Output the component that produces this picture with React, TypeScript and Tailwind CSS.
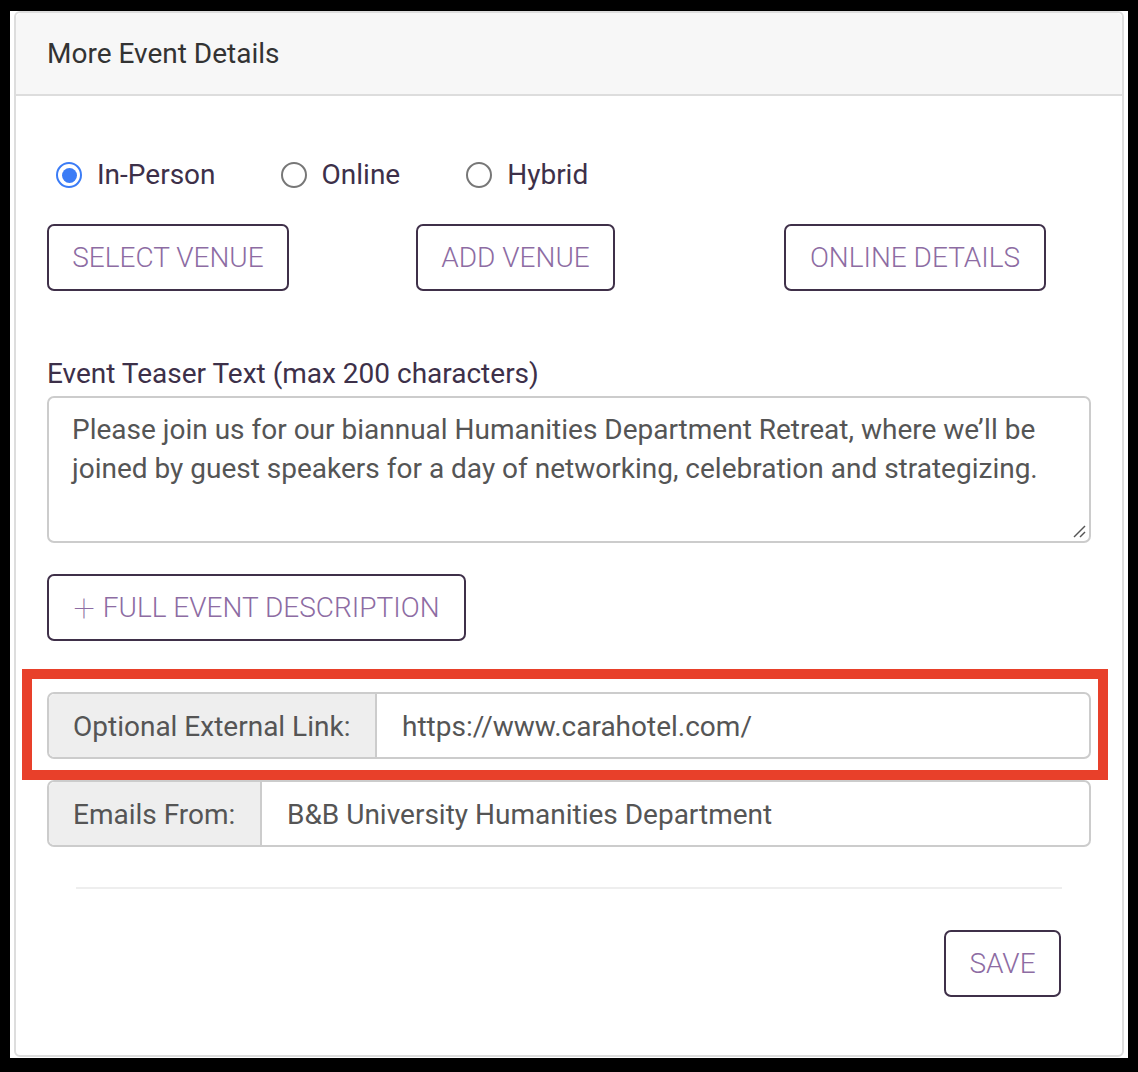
import React from "react";

const font = { fontFamily: "Roboto, 'Noto Sans', sans-serif" };

function Radio({ checked, label }: { checked?: boolean; label: string }) {
  return (
    <label className="flex items-center">
      {checked ? (
        <span className="flex h-[26px] w-[26px] items-center justify-center rounded-full border-[2.5px] border-[#3b7cf6] bg-white">
          <span className="h-[15px] w-[15px] rounded-full bg-[#3b7cf6]" />
        </span>
      ) : (
        <span className="h-[26px] w-[26px] rounded-full border-2 border-[#777777] bg-white" />
      )}
      <span className="ml-[15px] text-[28px] leading-[28px] text-[#3d3049]">{label}</span>
    </label>
  );
}

function OutlineButton({ children, w }: { children: React.ReactNode; w: string }) {
  return (
    <button
      className={`flex h-[67px] items-center justify-center rounded-[7px] border-2 border-[#3f3049] bg-white text-[28px] font-light text-[#8d6ca3] ${w}`}
    >
      {children}
    </button>
  );
}

export default function App() {
  return (
    <div className="h-[1072px] w-[1138px] bg-black pb-[14px] pl-[10px] pr-[10px] pt-[11px]" style={font}>
      <div className="h-full bg-white pl-[4px] pr-[4px]">
        <div className="flex h-[1046px] flex-col rounded-[6px] border-2 border-[#dddddd] bg-white">
          <div className="flex h-[83px] items-center rounded-t-[6px] border-b-2 border-[#dddddd] bg-[#f7f7f7] px-[31px]">
            <h2 className="text-[28px] font-normal text-[#333333]">More Event Details</h2>
          </div>
          <div className="flex flex-col px-[31px]">
            <div className="mt-[65px] flex items-center pl-[9px]">
              <Radio checked label="In-Person" />
              <div className="ml-[65px]">
                <Radio label="Online" />
              </div>
              <div className="ml-[66px]">
                <Radio label="Hybrid" />
              </div>
            </div>
            <div className="mt-[35px] flex items-center">
              <OutlineButton w="w-[242px]">SELECT VENUE</OutlineButton>
              <div className="ml-[127px]">
                <OutlineButton w="w-[199px]">ADD VENUE</OutlineButton>
              </div>
              <div className="ml-[169px]">
                <OutlineButton w="w-[262px]">ONLINE DETAILS</OutlineButton>
              </div>
            </div>
            <label className="mt-[67px] text-[28px] leading-[32px] text-[#3d3049]">
              Event Teaser Text (max 200 characters)
            </label>
            <div className="relative mt-[6px] h-[147px] rounded-[7px] border-2 border-[#cccccc] px-[23px] pt-[12px] text-[28px] leading-[39px] text-[#555555]">
              Please join us for our biannual Humanities Department Retreat, where we’ll be joined by guest speakers for a day of networking, celebration and strategizing.
              <svg className="absolute bottom-[2px] right-[2px]" width="16" height="16" viewBox="0 0 16 16">
                <line x1="3" y1="14" x2="14" y2="3" stroke="#555" strokeWidth="1.5" />
                <line x1="9" y1="14" x2="14" y2="9" stroke="#555" strokeWidth="1.5" />
              </svg>
            </div>
            <div className="mt-[31px] flex">
              <OutlineButton w="w-[419px]">
                <span className="mr-[8px] text-[38px] font-thin leading-none">+</span>FULL EVENT DESCRIPTION
              </OutlineButton>
            </div>
            <div className="relative mt-[51px]">
              <div className="pointer-events-none absolute bottom-[-21px] left-[-25px] right-[-17px] top-[-23px] border-[10px] border-[#e8402a]" />
              <div className="flex h-[67px] rounded-[7px] border-2 border-[#cccccc] text-[28px] text-[#555555]">
                <div className="flex w-[328px] items-center rounded-l-[6px] border-r-2 border-[#cccccc] bg-[#eeeeee] pl-[24px] pt-[2px]">
                  Optional External Link:
                </div>
                <div className="flex flex-1 items-center pl-[25px] pt-[2px]">https://www.carahotel.com/</div>
              </div>
            </div>
            <div className="mt-[21px] flex h-[67px] rounded-[7px] border-2 border-[#cccccc] text-[28px] text-[#555555]">
              <div className="flex w-[213px] items-center rounded-l-[6px] border-r-2 border-[#cccccc] bg-[#eeeeee] pl-[24px] pt-[2px]">
                Emails From:
              </div>
              <div className="flex flex-1 items-center pl-[25px] pt-[2px]">B&amp;B University Humanities Department</div>
            </div>
            <div className="mx-[29px] mt-[40px] h-[2px] bg-[#eeeeee]" />
            <div className="mr-[30px] mt-[41px] flex justify-end">
              <OutlineButton w="w-[117px]">SAVE</OutlineButton>
            </div>
          </div>
        </div>
      </div>
    </div>
  );
}
